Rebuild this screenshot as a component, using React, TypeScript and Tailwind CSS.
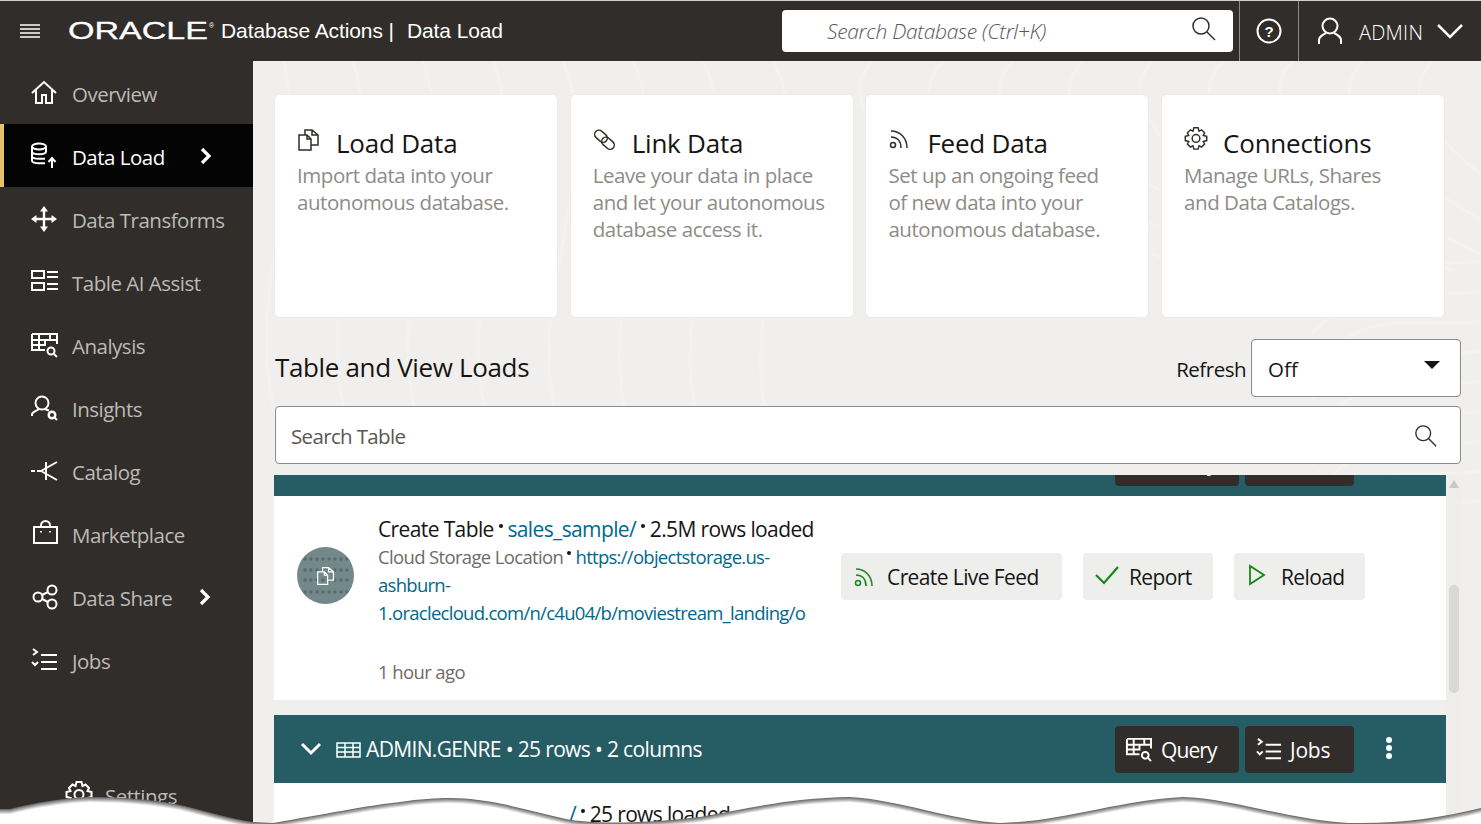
import React from "react";

const S = ({ w = 28, h = 28, vb = "0 0 28 28", c = "#fff", sw = 2, children, cls = "" }: any) => (
  <svg width={w} height={h} viewBox={vb} fill="none" stroke={c} strokeWidth={sw} className={"shrink-0 " + cls}>{children}</svg>
);
const Home = () => <S><path d="M2 14 14 3l12 11M6 11v13h6v-8h4v8h6V11" /></S>;
const DbUp = () => <S><ellipse cx="9" cy="4.500" rx="7" ry="3" /><path d="M2 4.500v14c0 1.800 3 2.800 7 2.800h6M16 4.500v5M2 9.500c0 1.800 3 2.800 7 2.800s7-1 7-2.800M2 14c0 1.800 3 2.800 7 2.800h6" /><path d="M22 26v-10M18.500 20 22 16l3.500 4" /></S>;
const Move = () => <S><path d="M14 4v20M4 14h20" strokeWidth="2.400" /><path d="M10 6.500 14 1l4 5.500zM10 21.500l4 5.500 4-5.500zM6.500 10 1 14l5.500 4zM21.500 10 27 14l-5.500 4z" fill="#fff" stroke="none" /></S>;
const AiList = () => <S><rect x="2" y="3" width="12" height="7" /><rect x="2" y="15" width="12" height="7" /><path d="M17 4h11M17 9h11M17 16h11M17 21h11" /></S>;
const Analysis = ({ s = 28, c = "#fff" }: any) => <S w={s} h={s} c={c}><path d="M2 3h25v10M2 3v16h13M2 9h25M2 14h13M9 3v16M15 9v6M20 3v6" /><circle cx="21" cy="20" r="3.500" /><path d="m24 23 3 3" /></S>;
const Insights = () => <S><circle cx="12" cy="9" r="6.500" /><path d="M2 22v-1.500c0-2.500 4-3 7-5.500M14.500 15l4.500 1.500" /><circle cx="22" cy="21" r="3.300" strokeWidth="2.400" /><path d="m24.500 23.500 2.500 2.500" /></S>;
const Catalog = () => <S><path d="M1 14h4M7 14h4M11 14 27 5M11 14l16 9M16 5v18" /></S>;
const Bag = () => <S><rect x="4" y="7" width="23" height="16" /><path d="M11 7V5.500a4.500 4.500 0 0 1 9 0V7M11 11v1.500M20 11v1.500" /></S>;
const Share = () => <S><circle cx="8" cy="14" r="4.500" /><circle cx="22" cy="7" r="4.500" /><circle cx="22" cy="21" r="4.500" /><path d="m12 12 6-3M12 16l6 3" /></S>;
const JobsI = ({ s = 28, c = "#fff" }: any) => <S w={s} h={s} c={c}><path d="m3 3 4 3-4 3M2 16l3 3 3-3M11 9h16M11 16h16M11 23h16" /></S>;
const Gear = ({ s = 28, c = "#fff", sw = 2 }: any) => <S w={s} h={s} c={c} sw={sw}><path d="M11.500 2h5l1 4 3-1.500 3.500 3.500L22.500 11l4 1v5l-4 1 1.500 3-3.500 3.500-3-1.500-1 4h-5l-1-4-3 1.500L4 21l1.500-3-4-1v-5l4-1L4 8l3.500-3.500 3 1.500z" /><circle cx="14" cy="14.500" r="4.500" /></S>;
const Chev = () => <svg width="14" height="20" viewBox="0 0 14 20" fill="none" stroke="#fff" strokeWidth="3.200"><path d="m3 3 7 7-7 7" /></svg>;
const Docs = ({ c = "#312d2a", s = 24 }: any) => <S w={s} h={s} vb="0 0 24 24" c={c} sw={1.500}><path d="M2 7h8l4 4v11H2zM10 7v4h4M8 7V2h7l6 5v10h-7M15 2v5h6" /></S>;
const Rss = ({ c = "#312d2a", s = 22, sw = 1.500 }: any) => <S w={s} h={s} vb="0 0 22 22" c={c} sw={sw}><circle cx="5" cy="17" r="2.500" /><path d="M3 9c6 0 10 4 10 11M3 3c9 0 16 7 16 17" /></S>;
const Link = () => <S w={24} h={24} vb="0 0 24 24" c="#312d2a" sw={1.500}><rect x="1" y="4" width="14" height="8.500" rx="4.250" transform="rotate(42 8 8.250)" /><rect x="8" y="11" width="14" height="8.500" rx="4.250" transform="rotate(42 15 15.250)" /></S>;
const Search = ({ s = 26 }: any) => <S w={s} h={s} vb="0 0 26 26" c="#312d2a" sw={1.500}><circle cx="10" cy="10" r="8" /><path d="m16 16 8 8" /></S>;
const Dot = () => <i className="inline-block w-[4px] h-[4px] rounded-full bg-[#161513] align-[9px]" />;

const nav: [string, React.ReactNode, boolean?, boolean?][] = [
  ["Overview", <Home />],
  ["Data Load", <DbUp />, true, true],
  ["Data Transforms", <Move />],
  ["Table AI Assist", <AiList />],
  ["Analysis", <Analysis />],
  ["Insights", <Insights />],
  ["Catalog", <Catalog />],
  ["Marketplace", <Bag />],
  ["Data Share", <Share />, true],
  ["Jobs", <JobsI />],
];

const cards: [string, React.ReactNode, string[]][] = [
  ["Load Data", <Docs />, ["Import data into your", "autonomous database."]],
  ["Link Data", <Link />, ["Leave your data in place", "and let your autonomous", "database access it."]],
  ["Feed Data", <Rss />, ["Set up an ongoing feed", "of new data into your", "autonomous database."]],
  ["Connections", <span className="block -mt-[2px]"><Gear s={24} c="#312d2a" sw={1.700} /></span>, ["Manage URLs, Shares", "and Data Catalogs."]],
];

const Bar = ({ title }: { title: string }) => (
  <div className="h-[68px] shrink-0 bg-[#265c63] flex items-center text-white pl-[26px] pr-[54px]">
    <svg width="22" height="14" viewBox="0 0 22 14" fill="none" stroke="#fff" strokeWidth="3" className="shrink-0 -mt-[1px]"><path d="m2 2 9 9 9-9" /></svg>
    <svg width="25" height="16" viewBox="0 0 25 16" fill="none" stroke="#fff" strokeWidth="1.500" className="ml-[14px] shrink-0 mt-[1px]"><path d="M1 1h23v14H1zM1 5.500h23M1 10h23M9 1v14M17 1v14" /></svg>
    <span className="ml-[5px] pt-[2px] text-[21px] tracking-[-0.65px]">{title}</span>
    <div className="ml-auto flex items-center gap-[6px]">
      <button className="h-[47px] w-[124px] bg-[#312d2a] rounded-[4px] flex items-center pl-[10px] gap-[9px] text-[21px] tracking-[-0.9px]"><Analysis s={27} /><span className="pt-[3px]">Query</span></button>
      <button className="h-[47px] w-[109px] bg-[#312d2a] rounded-[4px] flex items-center pl-[10px] gap-[8px] text-[21px] tracking-[-0.2px]"><JobsI s={27} /><span className="pt-[3px]">Jobs</span></button>
    </div>
    <div className="ml-[32px] -mt-[3px] flex flex-col gap-[2px]">
      <i className="w-[6px] h-[6px] bg-white rounded-full" /><i className="w-[6px] h-[6px] bg-white rounded-full" /><i className="w-[6px] h-[6px] bg-white rounded-full" />
    </div>
  </div>
);

const Action = ({ w, icon, label, gap }: any) => (
  <button className={`h-[47px] ${w} ${gap} bg-[#eeeeed] rounded-[4px] flex items-center pl-[12px] text-[21px] tracking-[-0.6px] text-[#161513]`}>{icon}<span className="pt-[3px]">{label}</span></button>
);

const edge = "M0 809 L10 809 C35 803 60 798 90 797 C125 797 155 800 180 805 C205 811 232 819 253 822 L273 823 C320 815 370 805 400 802 C420 799 435 798 450 798 C490 798 530 811 566 819 C590 824 640 824 700 817 C750 808 790 798 850 797 C900 800 950 820 1000 823 C1060 822 1120 800 1183 797 C1230 798 1290 820 1349 823 C1400 824 1440 818 1481 808 L1481 840 L0 840 Z";

const arcs = [0, 1, 2, 3, 4, 5, 6, 7, 8];

export default function App() {
  return (
    <div className="relative w-[1481px] h-[824px] overflow-hidden flex flex-col font-['Open_Sans',sans-serif] bg-[#f0efed]">
      <header className="h-[61px] shrink-0 bg-[#312d2a] border-t border-[#cfcfcf] flex items-center text-white">
        <svg width="20" height="14" viewBox="0 0 20 14" stroke="#fff" strokeWidth="1.500" className="ml-[20px] shrink-0"><path d="M0 1h20M0 5h20M0 9h20M0 13h20" /></svg>
        <svg width="148" height="24" viewBox="0 0 148 24" className="ml-[28px] shrink-0">
          <text x="0" y="20" fill="#fff" stroke="#fff" strokeWidth="0.300" fontFamily="'Liberation Sans',sans-serif" fontSize="24" textLength="140" lengthAdjust="spacingAndGlyphs">ORACLE</text>
          <text x="141" y="9" fill="#fff" fontFamily="'Liberation Sans',sans-serif" fontSize="7">®</text>
        </svg>
        <span className="ml-[5px] font-['Liberation_Sans',sans-serif] text-[21px] tracking-[-0.1px]">Database Actions |</span>
        <span className="ml-[13px] font-['Liberation_Sans',sans-serif] text-[21px] tracking-[-0.1px]">Data Load</span>
        <div className="ml-[279px] h-[42px] w-[451px] bg-white rounded-[4px] flex items-center pl-[45px] pr-[16px]">
          <span className="italic font-light text-[21px] text-[#5b5652] tracking-[-0.3px] pt-[2px]">Search Database (Ctrl+K)</span>
          <span className="ml-auto -mt-[4px]"><Search /></span>
        </div>
        <div className="ml-[6px] h-full w-[60px] border-l border-r border-[#8f8b87] flex items-center justify-center">
          <svg width="26" height="26" viewBox="0 0 26 26" fill="none" stroke="#fff" strokeWidth="2"><circle cx="13" cy="13" r="11.500" /><text x="13" y="18.500" textAnchor="middle" fill="#fff" stroke="none" fontSize="15" fontWeight="700" fontFamily="'Liberation Sans',sans-serif">?</text></svg>
        </div>
        <div className="flex-1 flex items-center pl-[17px]">
          <svg width="28" height="28" viewBox="0 0 28 28" fill="none" stroke="#fff" strokeWidth="2"><circle cx="14" cy="9" r="7.500" /><path d="M3 27v-4c0-3 3-5 7-7M25 27v-4c0-3-3-5-7-7" /></svg>
          <span className="ml-[15px] pt-[3px] text-[20px] font-light tracking-[0.25px]">ADMIN</span>
          <svg width="28" height="16" viewBox="0 0 28 16" fill="none" stroke="#fff" strokeWidth="2.500" className="ml-[13px]"><path d="m2 2 12 12L26 2" /></svg>
        </div>
      </header>
      <div className="flex-1 min-h-0 flex">
        <aside className="w-[253px] shrink-0 bg-[#312d2a] flex flex-col">
          {nav.map(([label, icon, chev, active]) => (
            <div key={label} className={active ? "h-[63px] shrink-0 flex items-center pl-[26px] text-[20.500px] tracking-[-0.5px] bg-[#040404] text-white border-l-[4px] border-[#e8c269]" : "h-[63px] shrink-0 flex items-center pl-[30px] text-[20.500px] tracking-[-0.5px] text-[#bdbab7]"}>
              {icon}
              <span className="ml-[14px] pt-[4px]">{label}</span>
              {chev && <span className={active ? "ml-[34px]" : "ml-[26px]"}><Chev /></span>}
            </div>
          ))}
          <div className="mt-[86px] flex items-center pl-[65px] text-[20.500px] tracking-[-0.5px] text-[#bdbab7]">
            <Gear s={28} />
            <span className="ml-[12px] pt-[4px]">Settings</span>
          </div>
        </aside>
        <main className="relative flex-1 min-w-0 pl-[21px] pr-[20px] pt-[33px] flex flex-col overflow-hidden">
          <svg width="1228" height="763" viewBox="0 0 1228 763" fill="none" stroke="#f3f2f0" strokeWidth="3" className="absolute left-0 top-0">
            {arcs.map((i) => <path key={i} d={`M${-40 + i * 70} 0c${30 + i * 4} 120 ${-60} 260 ${10} 400`} />)}
            {arcs.map((i) => <path key={"b" + i} d={`M${620 + i * 70} 0c${-60} 60 ${90} 150 ${260 - i * 6} 210`} />)}
            {arcs.map((i) => <path key={"c" + i} d={`M1228 ${200 + i * 30}c-60 10 -110 -20 -170 ${40 + i * 3}`} />)}
          </svg>
          <div className="relative flex gap-[11.700px]">
            {cards.map(([title, icon, lines]) => (
              <div key={title} className="h-[224px] w-[284px] bg-white rounded-[6px] border border-[#ecebe9] pl-[22px] pt-[30px]">
                <div className="flex items-start h-[38px]">
                  <span className="w-[39px] mt-[3px]">{icon}</span>
                  <span className="text-[26px] leading-[36px] text-[#161513] tracking-[-0.22px]">{title}</span>
                </div>
                <div className="text-[20.500px] leading-[27px] text-[#8f8b87] tracking-[-0.45px] -mt-[1px]">
                  {lines.map((l) => <div key={l}>{l}</div>)}
                </div>
              </div>
            ))}
          </div>
          <div className="relative mt-[21px] h-[58px] flex items-center">
            <h2 className="text-[26px] tracking-[-0.35px] text-[#161513] font-normal -mt-[2px] ml-[1px]">Table and View Loads</h2>
            <span className="ml-auto pt-[2px] text-[20.500px] tracking-[-0.5px] text-[#161513]">Refresh</span>
            <div className="ml-[5px] h-[58px] w-[210px] bg-white border border-[#8f8b87] rounded-[4px] flex items-center pl-[16px] text-[20.500px] text-[#161513]">
              <span className="pt-[2px]">Off</span>
              <svg width="16" height="8" viewBox="0 0 16 8" className="ml-auto mr-[20px] -mt-[6px]"><path d="M0 0h16L8 8z" fill="#161513" /></svg>
            </div>
          </div>
          <div className="relative mt-[9px] ml-[1px] h-[58px] shrink-0 bg-white border border-[#8f8b87] rounded-[4px] flex items-center pl-[15px] pr-[22px] text-[20.500px] tracking-[-0.65px] text-[#5b5652]">
            <span className="pt-[2px]">Search Table</span>
            <span className="ml-auto mt-[1px]"><Search s={24} /></span>
          </div>
          <div className="relative mt-[11px] flex-1 min-h-0 flex overflow-hidden">
            <div className="flex-1 min-w-0 -mt-[47px] flex flex-col">
              <Bar title="ADMIN.SALES" />
              <div className="h-[204px] shrink-0 bg-white flex items-start pl-[23px]">
                <div className="relative mt-[51px] w-[57px] h-[57px] rounded-full bg-[#72888a] shrink-0 flex items-center justify-center overflow-hidden">
                  <svg width="57" height="57" viewBox="0 0 57 57" className="absolute inset-0"><g fill="#566b6d">{[12, 23, 33, 45].flatMap((y) => [8, 14, 20, 26, 32, 38, 44, 50].map((x) => <circle key={x + "-" + y} cx={x} cy={y} r="1.700" />))}</g></svg>
                  <span className="relative"><Docs c="#fff" s={20} /></span>
                </div>
                <div className="ml-[24px] w-[450px] pt-[18px]">
                  <div className="text-[21px] leading-[30px] text-[#161513] tracking-[-0.62px] whitespace-nowrap">Create Table <Dot /> <span className="text-[#00688c]">sales_sample/</span> <Dot /> 2.5M rows loaded</div>
                  <div className="-mt-[1px] text-[18.500px] leading-[28px] text-[#6f6b67] tracking-[-0.65px]">Cloud Storage Location <Dot /> <span className="text-[#00688c] tracking-[-0.72px]">https://objectstorage.us-<br />ashburn-<br />1.oraclecloud.com/n/c4u04/b/moviestream_landing/o</span></div>
                  <div className="mt-[31px] text-[18.500px] leading-[28px] text-[#6f6b67] tracking-[-0.6px]">1 hour ago</div>
                </div>
                <div className="ml-[13px] mt-[57px] flex items-center">
                  <Action w="w-[221px]" gap="gap-[12px]" icon={<Rss c="#1a8a1a" s={22} sw={1.600} />} label="Create Live Feed" />
                  <span className="ml-[21px]"><Action w="w-[130px]" gap="gap-[10px]" icon={<svg width="24" height="20" viewBox="0 0 24 20" fill="none" stroke="#148a14" strokeWidth="2.200" className="-mt-[3px]"><path d="m1 10 8 8L23 2" /></svg>} label="Report" /></span>
                  <span className="ml-[21px]"><Action w="w-[131px]" gap="gap-[15px]" icon={<svg width="18" height="22" viewBox="0 0 18 22" fill="none" stroke="#148a14" strokeWidth="1.800" className="-mt-[3px] ml-[2px]"><path d="M2 2v18l14-9z" /></svg>} label="Reload" /></span>
                </div>
              </div>
              <div className="h-[15px] shrink-0" />
              <Bar title="ADMIN.GENRE • 25 rows • 2 columns" />
              <div className="flex-1 bg-white pl-[295px] pt-[16px] text-[21px] leading-[30px] text-[#161513] tracking-[-0.65px] whitespace-nowrap"><span className="text-[#00688c]">/</span> <Dot /> 25 rows loaded</div>
            </div>
            <div className="w-[15px] shrink-0 bg-[#efeeed] flex flex-col items-center pt-[5px]">
              <svg width="10" height="8" viewBox="0 0 10 8"><path d="M5 0l5 8H0z" fill="#c8c8c8" /></svg>
              <div className="mt-[97px] w-[10px] h-[108px] bg-[#d9d8d7] rounded-[5px]" />
            </div>
          </div>
        </main>
      </div>
      <svg width="1481" height="40" viewBox="0 784 1481 40" className="absolute left-0 bottom-0">
        <path d={edge} fill="#6f6f6f" />
        <path d={edge} fill="#8c8c8c" transform="translate(0 1)" />
        <path d={edge} fill="#a8a8a8" transform="translate(0 2)" />
        <path d={edge} fill="#c4c4c4" transform="translate(0 3)" />
        <path d={edge} fill="#e2e2e2" transform="translate(0 4)" />
        <path d={edge} fill="#fff" transform="translate(0 5)" />
      </svg>
    </div>
  );
}
